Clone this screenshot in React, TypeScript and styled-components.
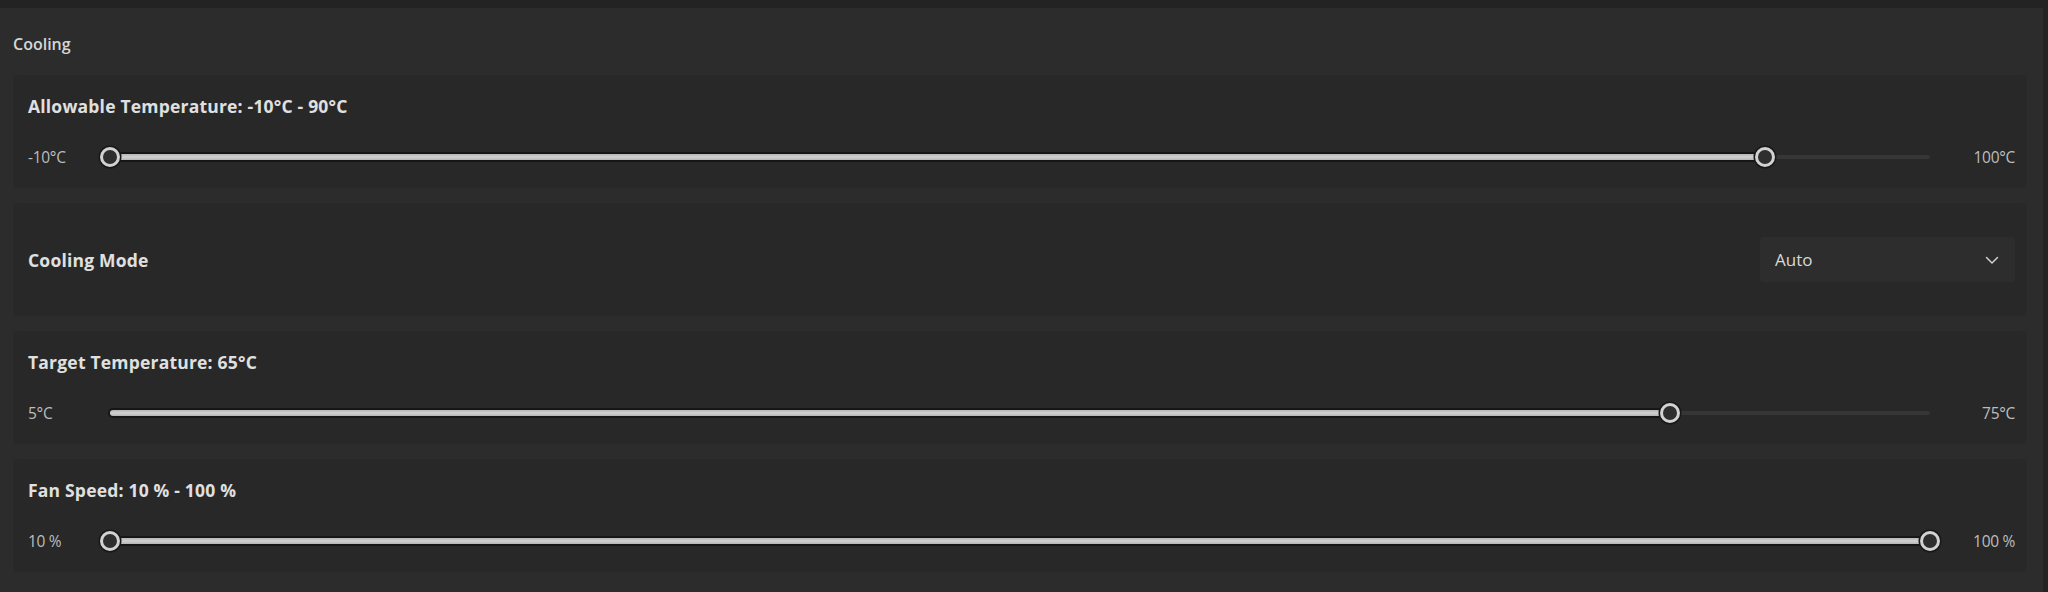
import React from "react";
import styled, { createGlobalStyle } from "styled-components";

const GlobalStyle = createGlobalStyle`
  html, body {
    margin: 0;
    padding: 0;
    background: #232323;
  }
  body {
    font-family: "Open Sans", "Noto Sans", "Liberation Sans", sans-serif;
    color: #e2e2e2;
  }
`;

const Page = styled.div`
  width: 2048px;
  height: 592px;
  box-sizing: border-box;
  padding: 8px 5px 0 0;
  overflow: hidden;
`;

const Section = styled.section`
  height: 584px;
  box-sizing: border-box;
  background: #2c2c2c;
  padding: 26px 16px 0 13px;
`;

const SectionTitle = styled.h2`
  margin: 0 0 20px;
  font-size: 16px;
  line-height: 21px;
  font-weight: 600;
  color: #d6d6d6;
`;

const CardList = styled.div`
  display: flex;
  flex-direction: column;
  gap: 15px;
`;

const Card = styled.div<{ $row?: boolean }>`
  height: 113px;
  box-sizing: border-box;
  background: #282828;
  border-radius: 4px;
  padding: ${(p) => (p.$row ? "0 12px 0 15px" : "19px 12px 0 15px")};
  display: flex;
  flex-direction: ${(p) => (p.$row ? "row" : "column")};
  align-items: ${(p) => (p.$row ? "center" : "stretch")};
  justify-content: ${(p) => (p.$row ? "space-between" : "flex-start")};
`;

const CardTitle = styled.div`
  font-size: 17.5px;
  line-height: 24px;
  font-weight: 700;
  color: #e0e0e0;
  letter-spacing: 0.2px;
`;

const SliderRow = styled.div`
  margin-top: 28px;
  height: 22px;
  display: flex;
  align-items: center;
`;

const EndLabel = styled.div<{ $right?: boolean }>`
  flex: none;
  width: ${(p) => (p.$right ? "76px" : "73px")};
  text-align: ${(p) => (p.$right ? "right" : "left")};
  font-size: 15.5px;
  letter-spacing: -0.3px;
  color: #bdbdbd;
  white-space: nowrap;
`;

const SliderArea = styled.div`
  position: relative;
  flex: 1;
  height: 22px;
`;

const Rail = styled.div`
  position: absolute;
  left: 9px;
  right: 9px;
  top: 50%;
  height: 4px;
  margin-top: -2px;
  border-radius: 2px;
  background: #363636;
`;

const Fill = styled.div`
  position: absolute;
  top: 50%;
  height: 6px;
  margin-top: -3px;
  border-radius: 3px;
  background: linear-gradient(#b4b4b4, #d2d2d2 50%, #b4b4b4);
  box-shadow: 0 0 0 2px #161616;
`;

const Thumb = styled.div`
  position: absolute;
  top: 50%;
  width: 20px;
  height: 20px;
  box-sizing: border-box;
  border-radius: 50%;
  border: 3px solid #d2d2d2;
  background: #2e2e2e;
  box-shadow: 0 0 0 1.5px #181818;
  transform: translate(-50%, -50%);
`;

const Select = styled.div`
  width: 255px;
  height: 45px;
  box-sizing: border-box;
  background: #2d2d2d;
  border-radius: 4px;
  padding: 0 16px 0 15px;
  display: flex;
  align-items: center;
  justify-content: space-between;
  font-size: 17px;
  color: #d8d8d8;
`;

type SliderProps = {
  min: number;
  max: number;
  values: number[];
  range?: boolean;
};

function Slider({ min, max, values, range }: SliderProps) {
  const pct = (v: number) => (v - min) / (max - min);
  const start = range ? pct(values[0]) : 0;
  const end = pct(values[values.length - 1]);
  const pos = (f: number) => `calc(9px + (100% - 18px) * ${f})`;
  return (
    <SliderArea>
      <Rail />
      <Fill style={{ left: pos(start), width: `calc((100% - 18px) * ${end - start})` }} />
      {(range ? values : [values[values.length - 1]]).map((v, i) => (
        <Thumb key={i} style={{ left: pos(pct(v)) }} />
      ))}
    </SliderArea>
  );
}

type SliderCardProps = {
  title: string;
  minLabel: string;
  maxLabel: string;
} & SliderProps;

function SliderCard({ title, minLabel, maxLabel, ...s }: SliderCardProps) {
  return (
    <Card>
      <CardTitle>{title}</CardTitle>
      <SliderRow>
        <EndLabel>{minLabel}</EndLabel>
        <Slider {...s} />
        <EndLabel $right>{maxLabel}</EndLabel>
      </SliderRow>
    </Card>
  );
}

function Chevron() {
  return (
    <svg width="14" height="14" viewBox="0 0 14 14" fill="none">
      <path d="M1.5 4.5 L7 10 L12.5 4.5" stroke="#cfcfcf" strokeWidth="1.5" strokeLinecap="round" strokeLinejoin="round" />
    </svg>
  );
}

export default function App() {
  return (
    <Page>
      <GlobalStyle />
      <Section>
        <SectionTitle>Cooling</SectionTitle>
        <CardList>
          <SliderCard
            title="Allowable Temperature: -10°C - 90°C"
            minLabel="-10°C"
            maxLabel="100°C"
            min={-10}
            max={100}
            values={[-10, 90]}
            range
          />
          <Card $row>
            <CardTitle>Cooling Mode</CardTitle>
            <Select>
              <span>Auto</span>
              <Chevron />
            </Select>
          </Card>
          <SliderCard
            title="Target Temperature: 65°C"
            minLabel="5°C"
            maxLabel="75°C"
            min={5}
            max={75}
            values={[65]}
          />
          <SliderCard
            title="Fan Speed: 10 % - 100 %"
            minLabel="10 %"
            maxLabel="100 %"
            min={10}
            max={100}
            values={[10, 100]}
            range
          />
        </CardList>
      </Section>
    </Page>
  );
}
